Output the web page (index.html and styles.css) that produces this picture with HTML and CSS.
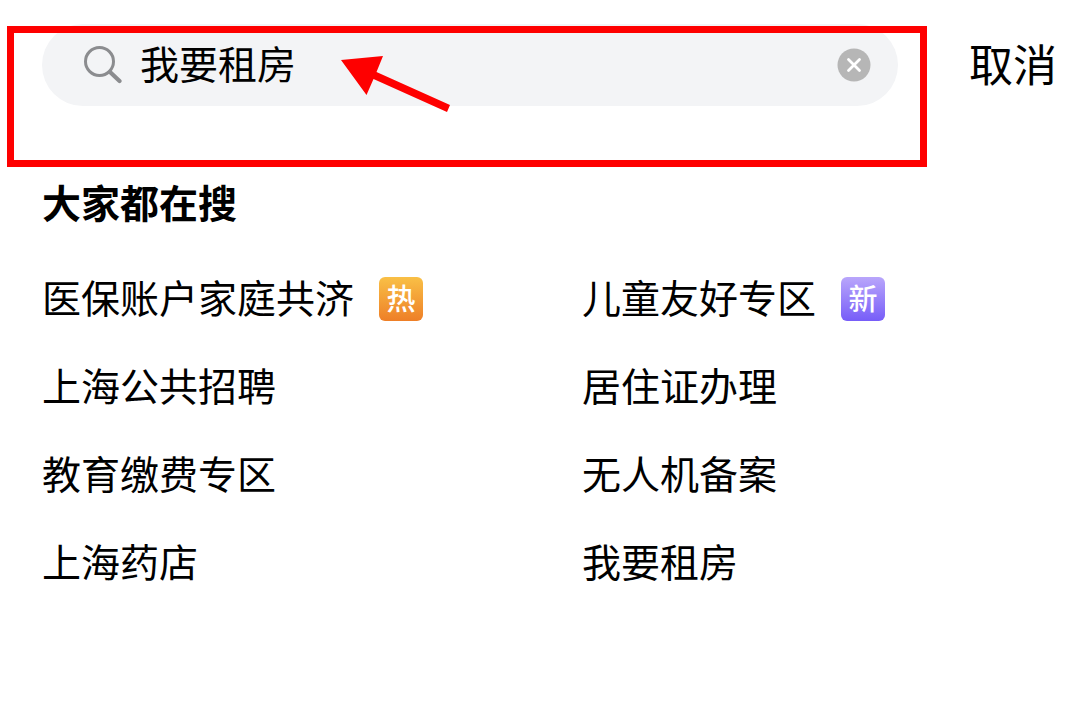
FILE: index.html
```html
<!DOCTYPE html>
<html lang="zh-CN">
<head>
<meta charset="utf-8">
<meta name="viewport" content="width=device-width, initial-scale=1">
<title>搜索</title>
<link rel="stylesheet" href="styles.css">
</head>
<body>
<header class="top">
  <form class="search" role="search">
    <svg class="search-icon" viewBox="0 0 38 38" aria-hidden="true">
      <circle cx="15.500" cy="15.500" r="14" fill="none" stroke="#8b8c8f" stroke-width="3"/>
      <path d="M26 26 35.500 35" fill="none" stroke="#8b8c8f" stroke-width="4.200" stroke-linecap="round"/>
    </svg>
    <input class="search-input" type="text" value="我要租房" aria-label="搜索">
    <button class="clear" type="button" aria-label="清除">
      <svg viewBox="0 0 34 34" aria-hidden="true">
        <circle cx="17" cy="17" r="16.500" fill="#b6b6b6"/>
        <path d="M11.500 11.500 22.500 22.500M22.500 11.500 11.500 22.500" stroke="#fff" stroke-width="2.800" stroke-linecap="round"/>
      </svg>
    </button>
    <span class="frame"></span>
    <svg class="arrow" viewBox="0 0 110 58" aria-hidden="true">
      <path d="M0 5 42 1 35.500 17 109 50 106 57 32.500 24 25.500 40Z" fill="#fe0000"/>
    </svg>
  </form>
  <button class="cancel" type="button">取消</button>
</header>
<main>
  <h1 class="title">大家都在搜</h1>
  <ul class="topics">
    <li><a href="#">医保账户家庭共济</a><span class="badge hot">热</span></li>
    <li><a href="#">儿童友好专区</a><span class="badge new">新</span></li>
    <li><a href="#">上海公共招聘</a></li>
    <li><a href="#">居住证办理</a></li>
    <li><a href="#">教育缴费专区</a></li>
    <li><a href="#">无人机备案</a></li>
    <li><a href="#">上海药店</a></li>
    <li><a href="#">我要租房</a></li>
  </ul>
</main>
</body>
</html>
```
FILE: styles.css
```css
* {
  box-sizing: border-box;
}

body {
  margin: 0;
  background: #fff;
  color: #000;
  font-family: "Noto Sans CJK SC", sans-serif;
  font-size: 39px;
  line-height: 56px;
}

button,
input {
  padding: 0;
  border: 0;
  background: none;
  color: inherit;
  font: inherit;
}

.top {
  display: flex;
  align-items: center;
  gap: 71px;
  padding: 24px 23px 0 42px;
}

.search {
  position: relative;
  display: flex;
  flex: 1;
  align-items: center;
  min-width: 0;
  height: 82px;
  padding: 0 27px 0 42px;
  border-radius: 41px;
  background: #f3f4f6;
}

.search-icon {
  flex: none;
  width: 38px;
  height: 38px;
}

.search-input {
  flex: 1;
  min-width: 0;
  margin-left: 18px;
  padding-bottom: 6px;
  outline: 0;
}

.clear {
  flex: none;
  width: 34px;
  height: 34px;
}

.clear svg {
  display: block;
}

.frame {
  position: absolute;
  inset: 2px -29px -61px -35px;
  border: 7px solid #fe0000;
  pointer-events: none;
}

.arrow {
  position: absolute;
  top: 31px;
  left: 299px;
  width: 110px;
  height: 58px;
  pointer-events: none;
}

.cancel {
  flex: none;
  padding-bottom: 4px;
  font-size: 44px;
}

.title {
  margin: 67px 0 0;
  padding: 0 42px;
  font-size: 39px;
  font-weight: 700;
}

.topics {
  display: grid;
  grid-template-columns: 1fr 1fr;
  grid-auto-rows: 88px;
  margin: 26px 0 0;
  padding: 0;
  list-style: none;
}

.topics li {
  display: flex;
  align-items: center;
  gap: 25px;
  padding-left: 42px;
  white-space: nowrap;
}

.topics a {
  padding-bottom: 6px;
  color: inherit;
  text-decoration: none;
}

.badge {
  width: 44px;
  height: 44px;
  border-radius: 6px;
  color: #fff;
  font-size: 29px;
  font-weight: 500;
  line-height: 40px;
  text-align: center;
}

.hot {
  background: linear-gradient(#f9c046, #ee7f27);
}

.new {
  background: linear-gradient(#b9a6fb, #775df8);
}
```
